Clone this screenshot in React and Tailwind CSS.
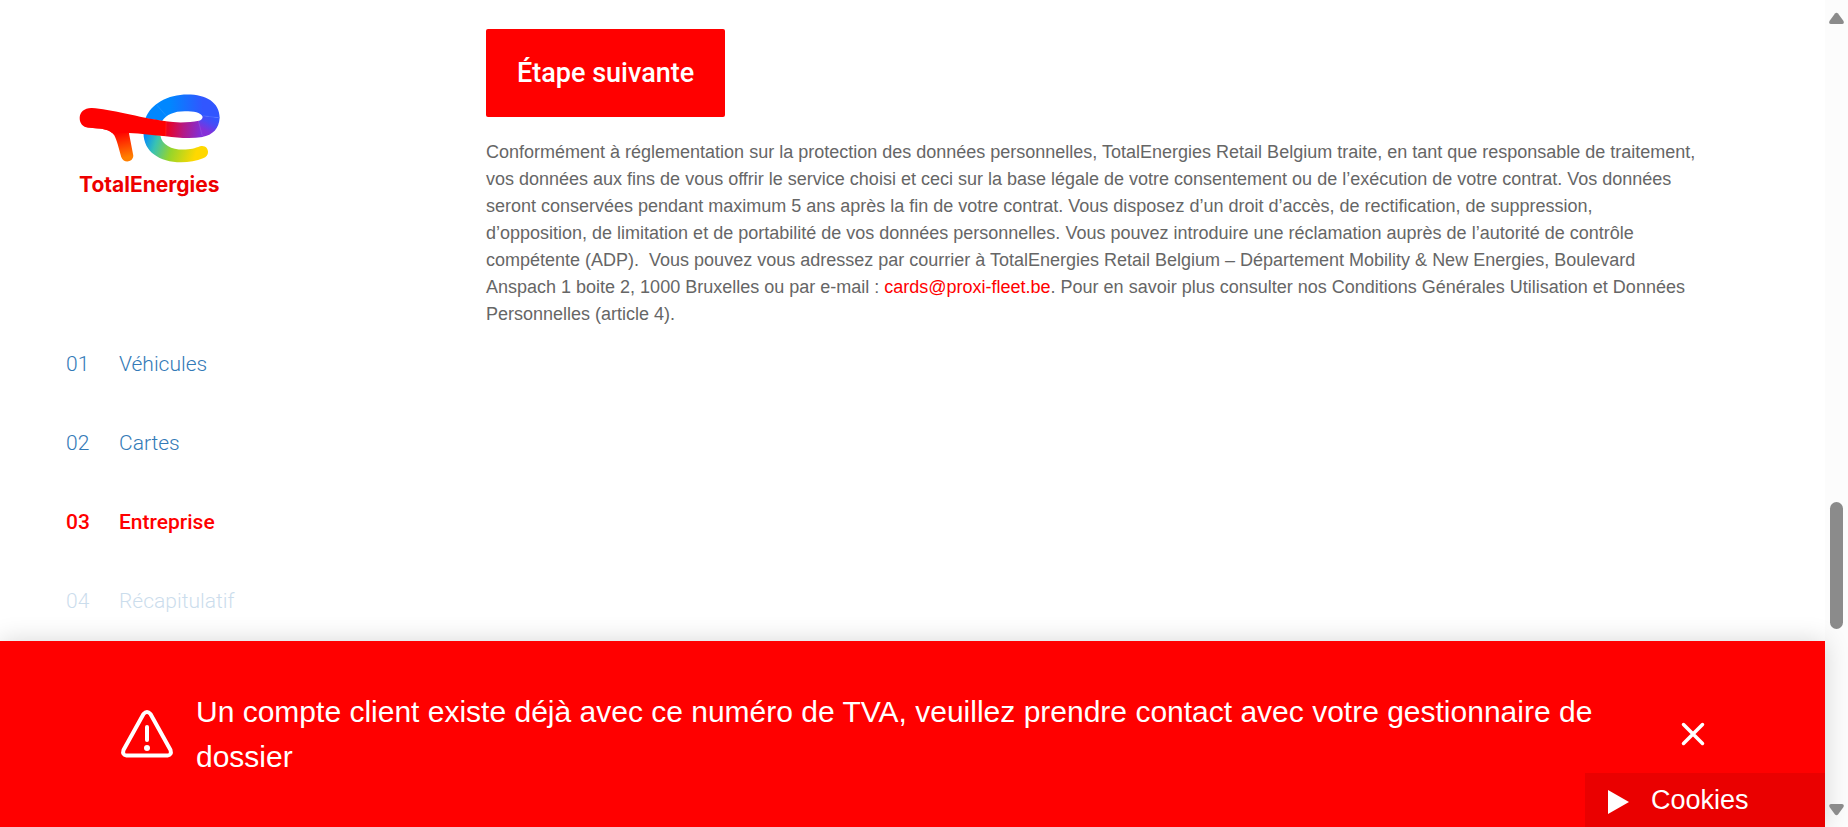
const steps = [
  { number: '01', label: 'Véhicules', tone: 'font-light text-[#337ab7]' },
  { number: '02', label: 'Cartes', tone: 'font-light text-[#337ab7]' },
  { number: '03', label: 'Entreprise', tone: 'font-medium text-[#ff0000]', current: true },
  { number: '04', label: 'Récapitulatif', tone: 'font-light text-[#337ab7] opacity-25' },
];

function Logo() {
  return (
    <a href="#accueil" aria-label="TotalEnergies" className="flex flex-col items-start">
      <svg viewBox="58 41 424 207" className="h-[69px] w-[141px]" aria-hidden="true">
        <defs>
          <linearGradient id="leg" gradientUnits="userSpaceOnUse" x1="185" y1="155" x2="203" y2="240">
            <stop offset="0" stopColor="#ff0000" />
            <stop offset="0.9" stopColor="#ff7f00" />
          </linearGradient>
          <linearGradient id="top" gradientUnits="userSpaceOnUse" x1="330" y1="80" x2="455" y2="80">
            <stop offset="0" stopColor="#0087ff" />
            <stop offset="0.8" stopColor="#3156ff" />
          </linearGradient>
          <linearGradient id="bar" gradientUnits="userSpaceOnUse" x1="320" y1="140" x2="425" y2="150">
            <stop offset="0" stopColor="#f00018" />
            <stop offset="0.5" stopColor="#b41a85" />
            <stop offset="1" stopColor="#8030d8" />
          </linearGradient>
          <linearGradient id="turn" gradientUnits="userSpaceOnUse" x1="458" y1="108" x2="428" y2="160">
            <stop offset="0" stopColor="#3156ff" />
            <stop offset="0.35" stopColor="#4a4af5" />
            <stop offset="0.8" stopColor="#8530d8" />
          </linearGradient>
          <linearGradient id="bowl" gradientUnits="userSpaceOnUse" x1="255" y1="160" x2="430" y2="218">
            <stop offset="0" stopColor="#0087ff" />
            <stop offset="0.22" stopColor="#38c2b4" />
            <stop offset="0.5" stopColor="#96d52b" />
            <stop offset="0.9" stopColor="#ffd800" />
          </linearGradient>
        </defs>
        <path fill="url(#bowl)" d="M252 158 L303 166 C307 193 336 208 371 208 C393 208 407 204 422 198 C437 194 446 204 446 215 C446 224 441 230 431 234 C412 242 389 246 365 246 C300 246 252 214 252 158Z" />
        <path fill="url(#top)" d="M258 114 C274 70 325 42 384 42 C440 42 481 65 481 113 L429 108 C424 97 404 93 376 93 C344 93 321 103 308 122Z" />
        <path fill="url(#turn)" d="M429 106 L481 112 C479 144 461 164 428 170 L414 123 C425 120 432 114 429 106Z" />
        <path fill="url(#bar)" d="M319 123 C352 128 391 127 418 121 L430 170 C395 176 357 173 319 168Z" />
        <path fill="url(#leg)" d="M85 142 C129 145 151 145 164 165 C172 179 178 206 185 230 C193 253 224 245 221 224 L208 157 L180 145Z" />
        <path fill="#ff0000" d="M97 83 C151 86 236 111 320 123 L320 168 C282 165 244 159 208 158 L158 158 C145 145 119 144 85 142 C70 141 60 129 60 113 C60 95 75 82 97 83Z" />
        <g stroke="#fff" strokeOpacity="0.2" strokeWidth="1.5">
          <path d="M292 74 L320 106" />
          <path d="M320 123 L319 168" />
          <path d="M417 122 L429 168" />
          <path d="M430 106 L478 112" />
        </g>
      </svg>
      <span className="mt-2 font-['Inter',sans-serif] text-[21px] leading-7 font-bold text-[#ed0000]">TotalEnergies</span>
    </a>
  );
}

function Scrollbar() {
  return (
    <div aria-hidden="true" className="flex w-[23px] shrink-0 flex-col items-center bg-[#fcfcfc] pt-3 pb-[11px]">
      <svg viewBox="0 0 15 12" className="h-3 w-[15px] fill-[#8b8b8b]">
        <path d="M6 1.5Q7.500 0 9 1.500L14.500 9Q15.500 12 13 12H2Q-.5 12 .5 9Z" />
      </svg>
      <div className="grow-[478]" />
      <div className="h-[127px] w-[13px] rounded-full bg-[#8b8b8b]" />
      <div className="grow-[175]" />
      <svg viewBox="0 0 15 12" className="h-3 w-[15px] rotate-180 fill-[#8b8b8b]">
        <path d="M6 1.5Q7.500 0 9 1.500L14.500 9Q15.500 12 13 12H2Q-.5 12 .5 9Z" />
      </svg>
    </div>
  );
}

export default function App() {
  return (
    <div className="flex min-h-screen bg-white font-['Liberation_Sans',Arial,sans-serif]">
      <div className="relative flex min-w-0 flex-1 flex-col">
        <div className="flex flex-1">
          <aside className="flex w-[486px] shrink-0 flex-col items-start pl-[66px]">
            <div className="pt-[94px] pl-[13px]">
              <Logo />
            </div>
            <nav aria-label="Étapes" className="pt-[149px] font-['Roboto',sans-serif] text-[21px] leading-8">
              <ol className="flex flex-col gap-[47px]">
                {steps.map((step) => (
                  <li key={step.number}>
                    <a href={`#etape-${step.number}`} aria-current={step.current ? 'step' : undefined} className={`flex ${step.tone}`}>
                      <span className="w-[53px]">{step.number}</span>
                      <span>{step.label}</span>
                    </a>
                  </li>
                ))}
              </ol>
            </nav>
          </aside>
          <main className="flex-1 pt-[29px] pr-32">
            <button type="button" className="rounded-xs bg-[#ff0000] px-[31px] py-6 font-['Roboto',sans-serif] text-[27px] leading-10 font-medium text-white">
              Étape suivante
            </button>
            <p className="mt-[22px] text-[18px] leading-[27px] text-[#666666]">
              Conformément à réglementation sur la protection des données personnelles, TotalEnergies Retail Belgium traite, en tant que responsable de traitement, vos données aux fins de vous offrir le service choisi et ceci sur la base légale de votre consentement ou de l’exécution de votre contrat. Vos données seront conservées pendant maximum 5 ans après la fin de votre contrat. Vous disposez d’un droit d’accès, de rectification, de suppression, d’opposition, de limitation et de portabilité de vos données personnelles. Vous pouvez introduire une réclamation auprès de l’autorité de contrôle compétente (ADP).&nbsp; Vous pouvez vous adressez par courrier à TotalEnergies Retail Belgium – Département Mobility &amp; New Energies, Boulevard Anspach 1 boite 2, 1000 Bruxelles ou par e-mail : <a href="mailto:cards@proxi-fleet.be" className="text-[#ff0000]">cards@proxi-fleet.be</a>. Pour en savoir plus consulter nos Conditions Générales Utilisation et Données Personnelles (article 4).
            </p>
          </main>
        </div>
        <div role="alert" className="flex items-center bg-[#ff0000] py-12 pr-[120px] pl-[120px] text-white shadow-[0_0_24px_rgba(0,0,0,0.16)]">
          <svg viewBox="0 0 54 50" className="h-[50px] w-[54px] shrink-0" fill="none" stroke="currentColor" aria-hidden="true">
            <path strokeWidth="4" strokeLinejoin="round" d="M23.500 5Q27 1 30.500 5L50.500 41Q52 46 47.500 46.500H6.500Q2 46 3.500 41Z" />
            <path strokeWidth="4" strokeLinecap="round" d="M27 18V31" />
            <circle cx="27" cy="39" r="3" fill="currentColor" stroke="none" />
          </svg>
          <p className="ml-[22px] flex-1 text-[30px] leading-[45px]">
            Un compte client existe déjà avec ce numéro de TVA, veuillez prendre contact avec votre gestionnaire de dossier
          </p>
          <button type="button" aria-label="Fermer" className="ml-20 shrink-0">
            <svg viewBox="0 0 24 24" className="size-6" fill="none" stroke="currentColor" strokeWidth="3.500" strokeLinecap="round">
              <path d="M2.500 2.500L21.500 21.500M21.500 2.500L2.500 21.500" />
            </svg>
          </button>
        </div>
        <button type="button" className="absolute right-0 bottom-0 flex h-[54px] w-60 items-center bg-[#ea0000] pl-[23px] text-[27px] leading-10 text-white">
          <svg viewBox="0 0 21 24" className="mt-1 mr-[22px] h-6 w-[21px] fill-white" aria-hidden="true">
            <path d="M0 0L21 12L0 24Z" />
          </svg>
          Cookies
        </button>
      </div>
      <Scrollbar />
    </div>
  );
}
